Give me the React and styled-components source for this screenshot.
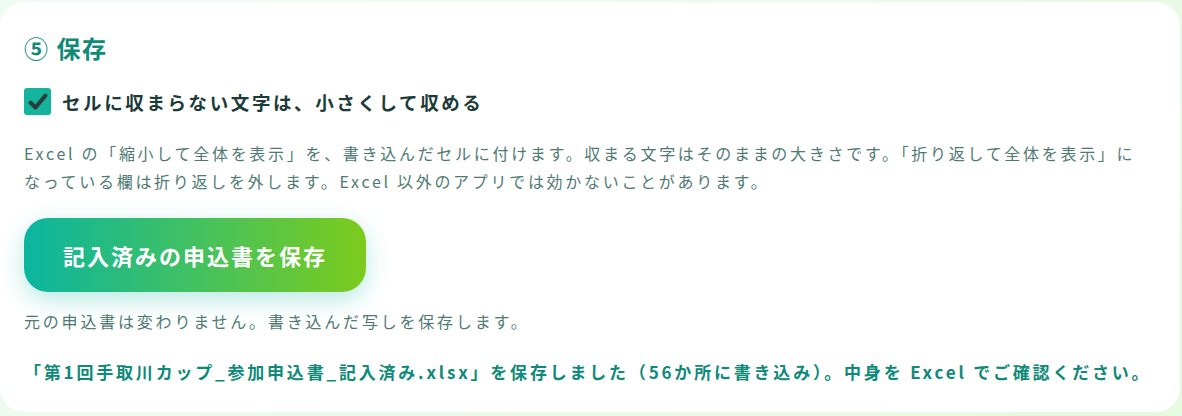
import React from "react";
import styled, { createGlobalStyle } from "styled-components";

const GlobalStyle = createGlobalStyle`
  html, body {
    margin: 0;
    padding: 0;
    background: linear-gradient(135deg, #effbf3 0%, #e6fadf 100%);
    font-family: "Noto Sans CJK JP", "Noto Sans", sans-serif;
  }
`;

const Page = styled.div`
  padding: 2px 2px 4px 0;
  min-height: 410px;
  box-sizing: border-box;
`;

const Card = styled.section`
  background: #ffffff;
  border-radius: 24px;
  padding: 30px 28px 26px 24px;
  height: 410px;
  box-sizing: border-box;
`;

const Heading = styled.h2`
  margin: 0;
  font-size: 24px;
  font-weight: 700;
  line-height: 32px;
  letter-spacing: 1.5px;
  color: #0f8a78;
`;

const CheckRow = styled.label`
  display: flex;
  align-items: center;
  gap: 11px;
  margin-top: 24px;
  cursor: pointer;
`;

const CheckBox = styled.span`
  display: inline-flex;
  align-items: center;
  justify-content: center;
  width: 27px;
  height: 27px;
  border-radius: 3px;
  background: #14b39c;
`;

const CheckLabel = styled.span`
  font-size: 18.5px;
  font-weight: 700;
  color: #1d3b38;
  letter-spacing: 2.6px;
`;

const Description = styled.p`
  margin: 24px 0 0 0;
  font-size: 16px;
  line-height: 28px;
  letter-spacing: 2.7px;
  color: #4f7a74;
`;

const SaveButton = styled.button`
  margin-top: 23px;
  width: 342px;
  height: 74px;
  border: none;
  border-radius: 24px;
  background: linear-gradient(90deg, #0bb5a0 0%, #48c25a 55%, #7ccb1c 100%);
  color: #ffffff;
  font-family: inherit;
  font-size: 22px;
  font-weight: 700;
  letter-spacing: 2px;
  box-shadow: 0 8px 24px rgba(20, 184, 166, 0.3);
  cursor: pointer;
`;

const Note = styled.p`
  margin: 17px 0 0 0;
  font-size: 16px;
  line-height: 24px;
  letter-spacing: 2.8px;
  color: #4f7a74;
`;

const Result = styled.p`
  margin: 26px 0 0 0;
  font-size: 17px;
  font-weight: 700;
  line-height: 26px;
  color: #0f8a78;
  letter-spacing: 2.8px;
`;

export default function App() {
  return (
    <>
      <GlobalStyle />
      <Page>
        <Card>
          <Heading>⑤ 保存</Heading>
          <CheckRow>
            <CheckBox>
              <svg width="22" height="22" viewBox="0 0 22 22">
                <path
                  d="M3.5 11.5 L8.5 16.5 L18.5 4.5"
                  fill="none"
                  stroke="#2b3a3a"
                  strokeWidth="4"
                  strokeLinecap="round"
                  strokeLinejoin="round"
                />
              </svg>
            </CheckBox>
            <CheckLabel>セルに収まらない文字は、小さくして収める</CheckLabel>
          </CheckRow>
          <Description>
            Excel の「縮小して全体を表示」を、書き込んだセルに付けます。収まる文字はそのままの大きさです。「折り返して全体を表示」になっている欄は折り返しを外します。Excel 以外のアプリでは効かないことがあります。
          </Description>
          <SaveButton>記入済みの申込書を保存</SaveButton>
          <Note>元の申込書は変わりません。書き込んだ写しを保存します。</Note>
          <Result>
            「第1回手取川カップ_参加申込書_記入済み.xlsx」を保存しました（56か所に書き込み）。中身を Excel でご確認ください。
          </Result>
        </Card>
      </Page>
    </>
  );
}
